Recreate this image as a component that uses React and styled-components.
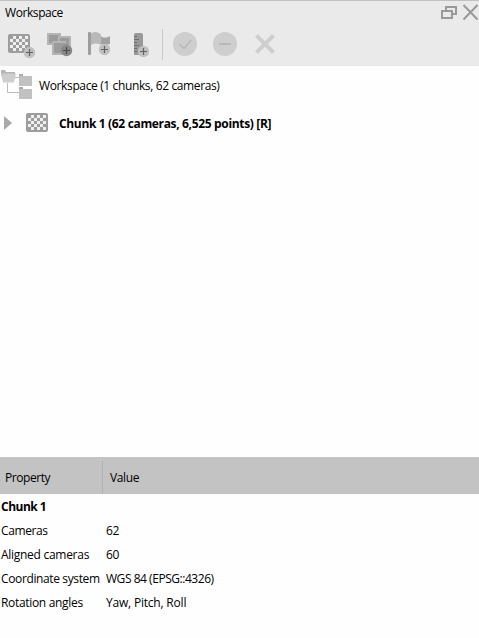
import React from "react";
import styled, { createGlobalStyle } from "styled-components";

const GlobalStyle = createGlobalStyle`
  * { box-sizing: border-box; }
  body {
    margin: 0;
    background: #fefefe;
    color: #000;
    font-family: "Open Sans", "Noto Sans", sans-serif;
    font-size: 12px;
    line-height: 16px;
  }
`;

const Panel = styled.main`
  display: flex;
  flex-direction: column;
  width: 479px;
  height: 638px;
  overflow: hidden;
  background: #fefefe;
`;

const Header = styled.header`
  flex: none;
  height: 66px;
  border-top: 1px solid #c1c1c1;
  background: #eaeaea;
`;

const TitleBar = styled.div`
  display: flex;
  align-items: center;
  height: 23px;
  padding-left: 5px;
`;

const WindowButtons = styled.div`
  display: flex;
  margin-left: auto;
  height: 23px;
`;

const Toolbar = styled.div`
  display: flex;
  height: 42px;
`;

const ToolButton = styled.button`
  flex: none;
  display: block;
  width: 40px;
  height: 42px;
  padding: 0;
  border: 0;
  background: none;
`;

const Separator = styled.div`
  width: 1px;
  height: 31px;
  margin: 5px 2px 0 2px;
  background: #c9c9c9;
`;

const Icon = styled.svg`
  display: block;
  flex: none;
`;

const Text = styled.span`
  white-space: nowrap;
  font-size: 12px;
  font-weight: ${(p) => (p.$bold ? 700 : 400)};
  letter-spacing: ${(p) => p.$track ?? -0.35}px;
`;

const Tree = styled.section`
  flex: 1;
`;

const TreeRow = styled.div`
  display: flex;
  align-items: center;
  height: 38px;
`;

const TreeLabel = styled(Text)`
  padding-top: 2px;
`;

const Table = styled.section`
  flex: none;
  height: 181px;
`;

const TableHead = styled.div`
  display: grid;
  grid-template-columns: 102px 1fr;
  height: 37px;
  background: #c3c3c3;
`;

const HeadCell = styled.div`
  display: flex;
  align-items: center;
  margin-top: 4px;
  padding-left: ${(p) => (p.$divided ? 7 : 5)}px;
  border-left: ${(p) => (p.$divided ? "1px solid #b1b1b1" : "0")};
`;

const TableRow = styled.div`
  display: grid;
  grid-template-columns: 105px 1fr;
  align-items: center;
  height: 24px;
  padding-left: 1px;
`;

const Rows = styled.div`
  padding-top: 1px;
`;

function Checker({ x, y }) {
  const cells = [];
  for (let r = 0; r < 5; r++) {
    for (let c = 0; c < 6; c++) {
      if ((r + c) % 2 === 1) {
        cells.push(<rect key={`${r}-${c}`} x={x + 2 + c * 3} y={y + 2 + r * 3} width="3" height="3" fill="#f0f0f0" />);
      }
    }
  }
  return (
    <g>
      <rect x={x} y={y} width="22" height="19" rx="2" fill="#9d9d9d" />
      {cells}
    </g>
  );
}

function PlusBadge({ x, y, fill = "#c0c0c0", stroke = "#626262" }) {
  return (
    <g>
      <circle cx={x} cy={y} r="5.7" fill={fill} />
      <path d={`M${x - 3.5} ${y}h7M${x} ${y - 3.5}v7`} stroke={stroke} strokeWidth="1.2" />
    </g>
  );
}

const AddChunkIcon = () => (
  <Icon width="40" height="42">
    <Checker x={8} y={10} />
    <PlusBadge x={29.5} y={28.5} />
  </Icon>
);

const AddPhotosIcon = () => (
  <Icon width="40" height="42">
    <rect x="7" y="9" width="14" height="12" fill="#b5b5b5" />
    <rect x="9" y="11" width="10" height="8" fill="#9b9b9b" />
    <rect x="18" y="12" width="13" height="12" fill="#b5b5b5" />
    <rect x="20" y="14" width="9" height="8" fill="#9b9b9b" />
    <rect x="12" y="17" width="14" height="14" fill="#b5b5b5" />
    <rect x="14" y="19" width="12" height="10" fill="#9b9b9b" />
    <PlusBadge x={26.5} y={26.5} fill="#888" stroke="#4d4d4d" />
  </Icon>
);

const AddMarkerIcon = () => (
  <Icon width="40" height="42">
    <path d="M11 9.500C15 7 18 8 21 10.500v10.500C18 19 15 19 11 21z" fill="#b9b9b9" />
    <path d="M21 12.500C24 14.500 27 13.500 30 12v8c-3 1-6 1-9 0z" fill="#a2a2a2" />
    <rect x="8" y="8" width="3" height="23" rx="1" fill="#9d9d9d" />
    <PlusBadge x={24.5} y={25.5} />
  </Icon>
);

const AddScaleBarIcon = () => (
  <Icon width="40" height="42">
    <path d="M14 11q0-2 2-2h5q2 0 2 2v20h-9z" fill="#999" />
    <path d="M14 12.500h3M14 15.500h5M14 18.500h3M14 21.500h5M14 24.500h3M14 27.500h5" stroke="#6e6e6e" />
    <PlusBadge x={23.5} y={27.5} />
  </Icon>
);

const EnableIcon = () => (
  <Icon width="40" height="42">
    <circle cx="20" cy="20" r="12" fill="#cecece" />
    <path d="M14 20l5 4.500 7-8.500" fill="none" stroke="#b9b9b9" strokeWidth="1.500" />
  </Icon>
);

const DisableIcon = () => (
  <Icon width="40" height="42">
    <circle cx="20" cy="20" r="12" fill="#cecece" />
    <rect x="14" y="19" width="12" height="2" fill="#b8b8b8" />
  </Icon>
);

const RemoveIcon = () => (
  <Icon width="40" height="42">
    <path d="M11.500 11.500l17 17M28.500 11.500l-17 17" stroke="#cecece" strokeWidth="4" />
  </Icon>
);

const RestoreIcon = () => (
  <Icon width="20" height="23">
    <path d="M6 9V6h10v7h-4" fill="none" stroke="#999" strokeWidth="2" />
    <rect x="2" y="10" width="10" height="7" fill="none" stroke="#999" strokeWidth="2" />
  </Icon>
);

const CloseIcon = () => (
  <Icon width="19" height="23">
    <path d="M3.500 4l14 14.500M17.500 4l-14 14.500" stroke="#999" strokeWidth="2" />
  </Icon>
);

const TreeIcon = () => (
  <Icon width="39" height="38">
    <path d="M7.500 17v9.500H19M15 11.500h4" fill="none" stroke="#bdbdbd" />
    <path d="M1 4h4l1 2h9v4H1z" fill="#b5b5b5" />
    <path d="M1 7.500h15l-2 9H3z" fill="#cecece" />
    <path d="M19 8h4v2h9v10H19zM19 21h4v2h9v10H19z" fill="#c1c1c1" />
    <path d="M19 8h4v2h-4zM19 21h4v2h-4z" fill="#aaa" />
  </Icon>
);

const ChunkIcon = () => (
  <Icon width="59" height="38">
    <path d="M4 12v14l8-7z" fill="#aaa" />
    <Checker x={26} y={9} />
  </Icon>
);

const tools = [AddChunkIcon, AddPhotosIcon, AddMarkerIcon, AddScaleBarIcon];
const chunkTools = [EnableIcon, DisableIcon, RemoveIcon];

const properties = [
  { name: "Chunk 1", value: "", bold: true, nameTrack: -0.5 },
  { name: "Cameras", value: "62", nameTrack: -0.4 },
  { name: "Aligned cameras", value: "60", nameTrack: -0.28 },
  { name: "Coordinate system", value: "WGS 84 (EPSG::4326)", nameTrack: -0.37, valueTrack: -0.46 },
  { name: "Rotation angles", value: "Yaw, Pitch, Roll", nameTrack: -0.32, valueTrack: -0.2 },
];

export default function App() {
  return (
    <>
      <GlobalStyle />
      <Panel>
        <Header>
          <TitleBar>
            <Text $track={-0.42}>Workspace</Text>
            <WindowButtons>
              <RestoreIcon />
              <CloseIcon />
            </WindowButtons>
          </TitleBar>
          <Toolbar>
            {tools.map((Glyph, i) => (
              <ToolButton key={i}><Glyph /></ToolButton>
            ))}
            <Separator />
            {chunkTools.map((Glyph, i) => (
              <ToolButton key={i}><Glyph /></ToolButton>
            ))}
          </Toolbar>
        </Header>
        <Tree>
          <TreeRow>
            <TreeIcon />
            <TreeLabel $track={-0.37}>Workspace (1 chunks, 62 cameras)</TreeLabel>
          </TreeRow>
          <TreeRow>
            <ChunkIcon />
            <TreeLabel $bold $track={-0.34}>Chunk 1 (62 cameras, 6,525 points) [R]</TreeLabel>
          </TreeRow>
        </Tree>
        <Table>
          <TableHead>
            <HeadCell><Text $track={-0.45}>Property</Text></HeadCell>
            <HeadCell $divided><Text>Value</Text></HeadCell>
          </TableHead>
          <Rows>
            {properties.map((p) => (
              <TableRow key={p.name}>
                <Text $bold={p.bold} $track={p.nameTrack}>{p.name}</Text>
                <Text $track={p.valueTrack}>{p.value}</Text>
              </TableRow>
            ))}
          </Rows>
        </Table>
      </Panel>
    </>
  );
}
